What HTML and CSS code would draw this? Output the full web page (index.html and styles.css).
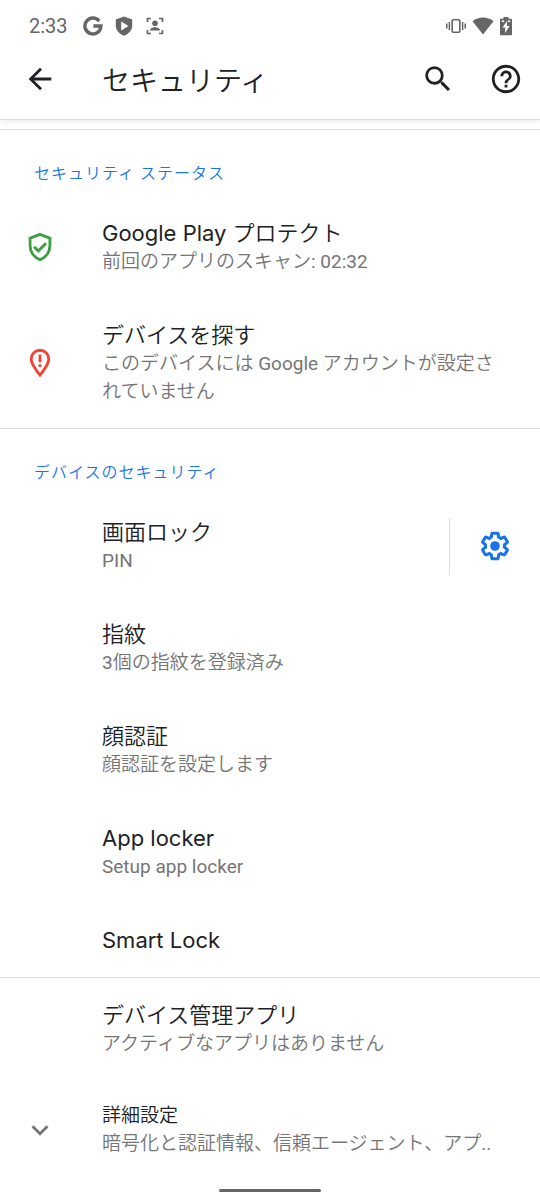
FILE: index.html
```html
<!DOCTYPE html>
<html lang="ja">

<head>
    <meta charset="UTF-8">
    <meta name="viewport" content="width=device-width, initial-scale=1.0">
    <title>セキュリティ</title>
    <link rel="stylesheet" href="styles.css">
</head>

<body>
    <header class="header">
        <div class="status-bar">
            <span class="time">2:33</span>
            <svg class="status-icon" viewBox="0 0 20 20" width="20" height="20">
                <path d="M16.2 5.1A8 8 0 1 0 17.9 10H10.4" fill="none" stroke="currentColor" stroke-width="3.4"/>
            </svg>
            <svg class="status-icon" viewBox="0 0 20 20" width="20" height="20">
                <path fill="currentColor" fill-rule="evenodd" d="M10 .5l8.2 3v6c0 4.6-3.2 8.3-8.2 10.2C5 17.8 1.800 14.1 1.800 9.500v-6zM7.200 5.500v9l7.300-4.500z"/>
            </svg>
            <svg class="status-icon" viewBox="0 0 20 20" width="20" height="20">
                <path fill="none" stroke="currentColor" stroke-width="1.700" d="M2.500 6V2.500H6M14 2.500h3.500V6M17.500 14v3.500H14M6 17.500H2.500V14"/>
                <circle cx="10" cy="7.300" r="2.800" fill="currentColor"/>
                <path fill="currentColor" d="M5 14.500c0-2.400 2.500-3.300 5-3.300s5 .9 5 3.300z"/>
            </svg>
            <div class="status-right">
                <svg viewBox="0 0 22 20" width="22" height="20">
                    <rect x="7.200" y="3.700" width="7.600" height="12.600" rx="1" fill="none" stroke="currentColor" stroke-width="1.600"/>
                    <path fill="none" stroke="currentColor" stroke-width="1.500" d="M4.400 6v8M1.800 7.500v5M17.600 6v8M20.200 7.500v5"/>
                </svg>
                <svg viewBox="0 0 22 20" width="22" height="20">
                    <path fill="currentColor" d="M.5 5.200C6.500.4 15.500.4 21.500 5.200L11 18.500z"/>
                </svg>
                <svg viewBox="0 0 14 20" width="14" height="20">
                    <path fill="currentColor" fill-rule="evenodd" d="M4.500 1h5v1.800h2.500c.6 0 1 .4 1 1v14.400c0 .6-.4 1-1 1H2c-.6 0-1-.4-1-1V3.800c0-.6.4-1 1-1h2.500zM8 5l-4.500 6.500h2.700V17l4.300-7H8z"/>
                    <path fill="#fff" d="M2.800 4.500h2.400v1.400H2.800zM8.800 4.500h2.400v1.400H8.800z"/>
                </svg>
            </div>
        </div>
        <div class="toolbar">
            <button class="icon-button" aria-label="戻る">
                <svg class="icon" viewBox="0 0 24 24">
                    <path fill="currentColor" d="M20 11H7.830l5.590-5.590L12 4l-8 8 8 8 1.410-1.410L7.830 13H20z"/>
                </svg>
            </button>
            <h1>セキュリティ</h1>
            <button class="icon-button" aria-label="検索">
                <svg class="icon" viewBox="0 0 24 24">
                    <path fill="currentColor" d="M15.500 14h-.79l-.28-.27A6.471 6.471 0 0 0 16 9.500 6.500 6.500 0 1 0 9.500 16c1.610 0 3.090-.59 4.230-1.570l.27.28v.79l5 4.990L20.490 19zm-6 0C7.010 14 5 11.990 5 9.500S7.010 5 9.500 5 14 7.010 14 9.500 11.990 14 9.500 14z"/>
                </svg>
            </button>
            <button class="icon-button" aria-label="ヘルプ">
                <svg class="icon" viewBox="0 0 24 24">
                    <path fill="currentColor" d="M11 18h2v-2h-2zm1-16C6.480 2 2 6.480 2 12s4.480 10 10 10 10-4.480 10-10S17.520 2 12 2zm0 18c-4.410 0-8-3.590-8-8s3.590-8 8-8 8 3.590 8 8-3.590 8-8 8zm0-14c-2.210 0-4 1.790-4 4h2c0-1.100.9-2 2-2s2 .9 2 2c0 2-3 1.750-3 5h2c0-2.250 3-2.500 3-5 0-2.210-1.790-4-4-4z"/>
                </svg>
            </button>
        </div>
    </header>

    <main>
        <section>
            <h2>セキュリティ ステータス</h2>
            <a class="row" href="#protect">
                <svg class="icon green" viewBox="0 0 24 24">
                    <path fill="none" stroke="currentColor" stroke-width="2" d="M12 3.100l7 2.700v5.400c0 4.300-2.800 8.200-7 9.700-4.200-1.500-7-5.400-7-9.700V5.800z"/>
                    <path fill="none" stroke="currentColor" stroke-width="2" d="M7.800 11.800l3 3 5.400-5.400"/>
                </svg>
                <span class="text">
                    <span class="title">Google Play プロテクト</span>
                    <span class="summary">前回のアプリのスキャン: 02:32</span>
                </span>
            </a>
            <a class="row" href="#find">
                <svg class="icon red" viewBox="0 0 24 24">
                    <path fill="none" stroke="currentColor" stroke-width="2" d="M12 3a6.200 6.200 0 0 0-6.200 6.200c0 4 3.200 7.400 6.200 11.300 3-3.900 6.200-7.300 6.200-11.300A6.200 6.200 0 0 0 12 3z"/>
                    <path fill="currentColor" d="M11 6h2v5.400h-2zM11 12.800h2v2h-2z"/>
                </svg>
                <span class="text">
                    <span class="title">デバイスを探す</span>
                    <span class="summary">このデバイスには Google アカウントが設定されていません</span>
                </span>
            </a>
        </section>

        <section>
            <h2>デバイスのセキュリティ</h2>
            <div class="split">
                <a class="row" href="#lock">
                    <span class="text">
                        <span class="title">画面ロック</span>
                        <span class="summary">PIN</span>
                    </span>
                </a>
                <button class="gear" aria-label="画面ロックの設定">
                    <svg class="icon" viewBox="0 0 24 24">
                        <path transform="translate(1.200 1.200) scale(.9)" fill="none" stroke="currentColor" stroke-width="2.400" d="M19.430 12.980c.04-.32.07-.64.07-.98 0-.34-.03-.66-.07-.98l2.110-1.650c.19-.15.24-.42.12-.64l-2-3.460c-.09-.16-.26-.25-.44-.25-.06 0-.12.01-.17.03l-2.490 1c-.52-.4-1.080-.73-1.690-.98l-.38-2.650C14.460 2.180 14.250 2 14 2h-4c-.25 0-.46.18-.49.42l-.38 2.650c-.61.25-1.170.59-1.690.98l-2.490-1c-.06-.02-.12-.03-.18-.03-.17 0-.34.09-.43.25l-2 3.460c-.13.22-.07.49.12.64l2.110 1.650c-.04.32-.07.65-.07.98s.03.66.07.98l-2.110 1.650c-.19.15-.24.42-.12.64l2 3.460c.09.16.26.25.44.25.06 0 .12-.01.17-.03l2.490-1c.52.4 1.080.73 1.690.98l.38 2.650c.03.24.24.42.49.42h4c.25 0 .46-.18.49-.42l.38-2.650c.61-.25 1.170-.59 1.690-.98l2.490 1c.06.02.12.03.18.03.17 0 .34-.09.43-.25l2-3.460c.12-.22.07-.49-.12-.64z"/>
                        <circle cx="12" cy="12" r="3.400" fill="currentColor"/>
                    </svg>
                </button>
            </div>
            <a class="row" href="#fingerprint">
                <span class="text">
                    <span class="title">指紋</span>
                    <span class="summary">3個の指紋を登録済み</span>
                </span>
            </a>
            <a class="row" href="#face">
                <span class="text">
                    <span class="title">顔認証</span>
                    <span class="summary">顔認証を設定します</span>
                </span>
            </a>
            <a class="row" href="#applocker">
                <span class="text">
                    <span class="title">App locker</span>
                    <span class="summary">Setup app locker</span>
                </span>
            </a>
            <a class="row" href="#smartlock">
                <span class="text">
                    <span class="title">Smart Lock</span>
                </span>
            </a>
        </section>

        <section>
            <a class="row" href="#admin">
                <span class="text">
                    <span class="title">デバイス管理アプリ</span>
                    <span class="summary">アクティブなアプリはありません</span>
                </span>
            </a>
            <a class="row advanced" href="#advanced">
                <svg class="icon grey" viewBox="0 0 24 24">
                    <path fill="currentColor" d="M16.590 8.590L12 13.170 7.410 8.590 6 10l6 6 6-6z"/>
                </svg>
                <span class="text">
                    <span class="title">詳細設定</span>
                    <span class="summary">暗号化と認証情報、信頼エージェント、アプ..</span>
                </span>
            </a>
        </section>
    </main>

    <div class="nav-bar"><div class="pill"></div></div>
</body>

</html>
```

FILE: styles.css
```css
* {
    box-sizing: border-box;
}

body {
    margin: 0;
    min-height: 100vh;
    display: flex;
    flex-direction: column;
    background: #fff;
    color: #202124;
    font-family: Roboto, "Noto Sans CJK JP DemiLight", "Noto Sans CJK JP", sans-serif;
}

button {
    border: none;
    background: none;
    padding: 0;
    color: inherit;
    cursor: pointer;
}

svg {
    display: block;
    flex: none;
}

.header {
    height: 120px;
    margin-bottom: 9px;
    border-bottom: 1px solid #e0e0e0;
    box-shadow: 0 2px 6px rgba(0, 0, 0, 0.08);
}

.status-bar {
    display: flex;
    align-items: center;
    gap: 11px;
    height: 40px;
    padding: 12px 27px 0 29px;
    color: #666;
}

.time {
    font-size: 20px;
    margin-right: 4px;
}

.status-right {
    display: flex;
    gap: 5px;
    margin-left: auto;
}

.toolbar {
    display: flex;
    align-items: center;
    gap: 34px;
    height: 78px;
    padding: 0 17px 0 23px;
}

.icon {
    width: 34px;
    height: 34px;
}

h1 {
    flex: 1;
    margin: 0 0 0 11px;
    padding-top: 6px;
    font-size: 28px;
    font-weight: 400;
    line-height: 40px;
}

section {
    border-top: 1px solid #dadce0;
}

h2 {
    margin: 0;
    padding: 32px 34px 10px;
    font-size: 16px;
    font-weight: 400;
    line-height: 24px;
    letter-spacing: 1px;
    color: #1a73e8;
}

.row {
    display: flex;
    align-items: center;
    padding: 22px 36px 22px 23px;
    color: inherit;
    text-decoration: none;
}

.text {
    flex: 1;
    min-width: 0;
    margin-left: 79px;
}

.icon + .text {
    margin-left: 45px;
}

.title,
.summary {
    display: block;
}

.title {
    font-family: Inter, "Noto Sans CJK JP DemiLight", "Noto Sans CJK JP", sans-serif;
    font-size: 22px;
    line-height: 30px;
}

.summary {
    font-size: 19px;
    line-height: 28px;
    color: #757575;
}

.split {
    display: flex;
    align-items: center;
}

.split .row {
    flex: 1;
}

.gear {
    display: flex;
    align-items: center;
    justify-content: center;
    width: 91px;
    height: 57px;
    border-left: 1px solid #dadce0;
    color: #1a73e8;
}

.advanced .title {
    font-size: 19px;
    line-height: 28px;
}

.advanced .summary {
    white-space: nowrap;
}

.green {
    color: #3c9f40;
}

.red {
    color: #f44336;
}

.grey {
    color: #757575;
}

.nav-bar {
    margin-top: auto;
    padding: 8px 0;
}

.pill {
    width: 102px;
    height: 3px;
    margin: 0 auto;
    border-radius: 2px;
    background: #666;
}
```
